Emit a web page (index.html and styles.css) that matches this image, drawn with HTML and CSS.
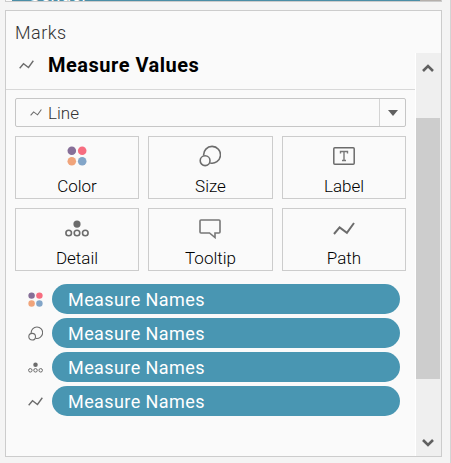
FILE: index.html
```html
<!DOCTYPE html>
<html lang="en">
<head>
<meta charset="utf-8">
<title>Marks</title>
<link rel="stylesheet" href="styles.css">
</head>
<body>
<svg width="0" height="0" class="defs">
  <symbol id="color" viewBox="0 0 20 20"><circle cx="4.8" cy="4.8" r="4.3" fill="#866f98"/><circle cx="15.2" cy="4.8" r="4.3" fill="#f76d80"/><circle cx="4.8" cy="15.2" r="4.3" fill="#f0a47b"/><circle cx="15.2" cy="15.2" r="4.3" fill="#82a5c8"/></symbol>
  <symbol id="size" viewBox="0 0 22 22"><g fill="none" stroke="currentColor" stroke-width="1.6"><path d="M4.7 10.6A8.4 8.4 0 1 1 11.2 18"/><circle cx="6.1" cy="15.7" r="4.9"/></g></symbol>
  <symbol id="detail" viewBox="0 0 24 17"><circle cx="12" cy="4.1" r="3.6" fill="currentColor"/><g fill="none" stroke="currentColor" stroke-width="1.6"><circle cx="3.7" cy="13" r="2.8"/><circle cx="12" cy="13" r="2.8"/><circle cx="20.3" cy="13" r="2.8"/></g></symbol>
  <symbol id="path" viewBox="0 0 22 13"><path d="M1 12L6.6 5.4L13.9 10.8L21 1" fill="none" stroke="currentColor" stroke-width="2"/></symbol>
</svg>
<div class="shelf"><div class="shelf-pill"><span>Gender</span></div><div class="shelf-scroll"></div></div>
<main class="card">
  <h1>Marks</h1>
  <div class="body">
    <section class="content">
      <header><svg class="h-icon"><use href="#path"/></svg><h2>Measure Values</h2></header>
      <div class="select"><svg class="s-icon"><use href="#path"/></svg><span>Line</span><i><svg width="10" height="6" viewBox="0 0 10 6"><path d="M0 0H10L5 6Z" fill="#606060"/></svg></i></div>
      <div class="grid">
        <div class="btn"><svg width="20" height="20"><use href="#color"/></svg><span>Color</span></div>
        <div class="btn"><svg width="22" height="22"><use href="#size"/></svg><span>Size</span></div>
        <div class="btn"><svg width="22" height="18" viewBox="0 0 22 18"><rect x=".8" y=".8" width="20.4" height="16.4" rx="1" fill="none" stroke="#6b6b6b" stroke-width="1.5"/><path d="M7.5 6.5V4.5H14.5V6.5M11 4.5V13.5M9 13.5H13" fill="none" stroke="#777" stroke-width="1.4"/></svg><span>Label</span></div>
        <div class="btn"><svg width="24" height="17"><use href="#detail"/></svg><span>Detail</span></div>
        <div class="btn"><svg class="tip" width="22" height="20" viewBox="0 0 22 20"><path d="M2 1H20Q21 1 21 2V13Q21 14 20 14H16V18.5L10.5 14H2Q1 14 1 13V2Q1 1 2 1Z" fill="none" stroke="#777" stroke-width="1.6"/></svg><span>Tooltip</span></div>
        <div class="btn"><svg width="22" height="13"><use href="#path"/></svg><span>Path</span></div>
      </div>
      <div class="pills">
        <div class="row"><svg width="15" height="15"><use href="#color"/></svg><div class="pill">Measure Names</div></div>
        <div class="row"><svg width="15" height="15"><use href="#size"/></svg><div class="pill">Measure Names</div></div>
        <div class="row"><svg width="15" height="11"><use href="#detail"/></svg><div class="pill">Measure Names</div></div>
        <div class="row"><svg width="15" height="9"><use href="#path"/></svg><div class="pill">Measure Names</div></div>
      </div>
    </section>
    <aside class="scroll">
      <svg width="12" height="10" viewBox="0 0 12 10"><path d="M1 8L6 3L11 8" fill="none" stroke="#606060" stroke-width="2.6"/></svg>
      <div class="thumb"></div>
      <svg width="12" height="10" viewBox="0 0 12 10"><path d="M1 2L6 7L11 2" fill="none" stroke="#606060" stroke-width="2.6"/></svg>
    </aside>
  </div>
</main>
</body>
</html>
```
FILE: styles.css
```css
* { box-sizing: border-box; }
body { margin: 0; width: 451px; height: 463px; overflow: hidden; background: #f4f4f4; border-right: 1px solid #d4d4d4; font-family: Roboto, "Liberation Sans", sans-serif; color: #222; }
.defs { display: block; position: absolute; }
svg { display: block; flex: none; color: #6c6c6c; }
.shelf { margin-left: 5px; width: 437px; height: 2px; border: 1px solid #ccc; border-top: 0; background: #fafafa; display: flex; overflow: hidden; }
.shelf-pill { margin-left: 6px; width: 408px; height: 1px; background: #4b8ea6; color: #fff; font-size: 18px; overflow: hidden; }
.shelf-pill span { display: block; margin: -15px 0 0 16px; line-height: 20px; letter-spacing: .4px; }
.shelf-scroll { flex: 1; background: #b5b0ac; }
.card { margin: 8px 0 0 5px; width: 437px; height: 447px; border: 1px solid #ccc; background: #fafafa; }
h1 { margin: 0; padding: 8px 0 0 9px; height: 42px; font-size: 18px; line-height: 27px; font-weight: 300; letter-spacing: .5px; color: #333; }
.body { display: flex; height: 403px; }
.content { width: 410px; border-right: 1px solid #fff; }
header { display: flex; height: 37px; border-bottom: 1px solid #d8d8d8; }
.h-icon { width: 15px; height: 9px; margin: 7px 0 0 13px; }
h2 { margin: 0 0 0 14px; font-size: 20px; line-height: 24px; font-weight: 700; letter-spacing: .5px; color: #000; }
.select { display: flex; align-items: center; margin: 8px 0 0 9px; width: 391px; height: 29px; border: 1px solid #c6c6c6; border-radius: 2px; font-size: 17px; font-weight: 300; color: #333; }
.s-icon { width: 12px; height: 7px; margin: 0 6px 0 14px; }
.select i { margin-left: auto; width: 26px; height: 27px; border-left: 1px solid #d4d4d4; display: flex; align-items: center; justify-content: center; }
.grid { display: grid; grid-template-columns: 124px 125px 124px; gap: 9px; margin: 9px 0 0 9px; }
.btn { height: 63px; border: 1px solid #ccc; display: grid; grid-template-rows: 38px 22px; justify-items: center; align-items: center; font-size: 17px; font-weight: 300; line-height: 22px; color: #000; }
.btn svg { margin-right: 1px; }
.btn .tip { margin-top: 2px; }
.pills { display: grid; gap: 4px; margin: 13px 0 0 22px; }
.row { display: flex; align-items: center; gap: 9px; }
.pill { width: 348px; height: 30px; border-radius: 15px; background: #4996b2; color: #fff; padding-left: 16px; font-size: 18px; line-height: 31px; letter-spacing: .42px; }
.scroll { width: 25px; background: #efefef; display: flex; flex-direction: column; align-items: center; padding: 10px 0 8px; }
.scroll svg { margin-right: 1px; }
.thumb { width: 24px; height: 261px; background: #cdcdcd; margin: 45px 1px auto 0; }
```
